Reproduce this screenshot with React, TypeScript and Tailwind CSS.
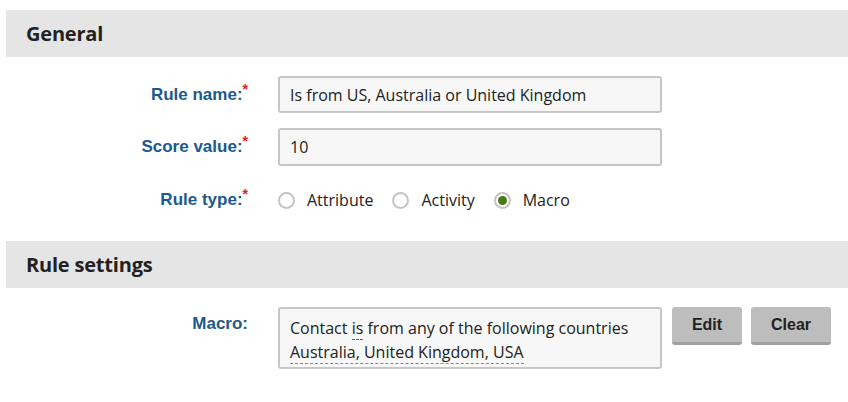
import React from "react";

const sans = { fontFamily: '"Open Sans", "Noto Sans", sans-serif' };

function Header({ title }: { title: string }) {
  return (
    <div className="ml-[6px] h-[47px] bg-[#e5e5e5] flex items-center pl-[20px]">
      <h2 className="text-[20px] font-bold text-[#222] tracking-[-0.2px]" style={sans}>
        {title}
      </h2>
    </div>
  );
}

function Label({ text, required }: { text: string; required?: boolean }) {
  return (
    <div className="w-[248px] shrink-0 text-right text-[17px] font-bold text-[#1b5a8c] font-['Liberation_Sans',Arial,sans-serif]">
      {text}
      {required && <span className="text-[#e0201a] align-top text-[14px] leading-[14px]">*</span>}
    </div>
  );
}

function Radio({ label, checked }: { label: string; checked?: boolean }) {
  return (
    <div className="flex items-center mr-[19px]">
      <span className="w-[17px] h-[17px] rounded-full border-[2px] border-[#c4c4c4] bg-white flex items-center justify-center">
        {checked && <span className="w-[9px] h-[9px] rounded-full bg-[#4a7a14]" />}
      </span>
      <span className="ml-[12px] text-[16px] text-[#222]" style={sans}>
        {label}
      </span>
    </div>
  );
}

function Btn({ text, w }: { text: string; w: string }) {
  return (
    <button
      className={`${w} h-[38px] bg-[#bdbdbd] rounded-[3px] border-b-[3px] border-[#a0a0a0] text-[16px] font-bold text-[#222] font-['Liberation_Sans',Arial,sans-serif]`}
    >
      {text}
    </button>
  );
}

export default function App() {
  return (
    <div className="w-[848px] h-[402px] bg-white pt-[10px]">
      <Header title="General" />
      <div className="flex items-center mt-[19px]">
        <Label text="Rule name:" required />
        <div
          className="ml-[30px] w-[384px] h-[37px] border-[2px] border-[#c6c6c6] rounded-[3px] bg-[#f7f7f7] flex items-center pl-[10px] text-[16px] text-[#222]"
          style={sans}
        >
          Is from US, Australia or United Kingdom
        </div>
      </div>
      <div className="flex items-center mt-[15px]">
        <Label text="Score value:" required />
        <div
          className="ml-[30px] w-[384px] h-[38px] border-[2px] border-[#c6c6c6] rounded-[3px] bg-[#f7f7f7] flex items-center pl-[10px] text-[16px] text-[#222]"
          style={sans}
        >
          10
        </div>
      </div>
      <div className="flex items-center mt-[15px] h-[38px]">
        <Label text="Rule type:" required />
        <div className="ml-[30px] flex items-center">
          <Radio label="Attribute" />
          <Radio label="Activity" />
          <Radio label="Macro" checked />
        </div>
      </div>
      <div className="mt-[22px]">
        <Header title="Rule settings" />
      </div>
      <div className="flex items-start mt-[19px]">
        <div className="pt-[4px]">
          <Label text="Macro:" />
        </div>
        <div
          className="ml-[30px] w-[384px] h-[62px] border-[2px] border-[#c6c6c6] rounded-[3px] bg-[#f7f7f7] pl-[10px] pt-[7px] text-[16px] leading-[24px] text-[#222]"
          style={sans}
        >
          <div>
            Contact <span className="border-b border-dashed border-[#666]">is</span> from any of the following countries
          </div>
          <div>
            <span className="border-b border-dashed border-[#888]">Australia, United Kingdom, USA</span>
          </div>
        </div>
        <div className="ml-[10px] flex gap-[9px]">
          <Btn text="Edit" w="w-[70px]" />
          <Btn text="Clear" w="w-[80px]" />
        </div>
      </div>
    </div>
  );
}
